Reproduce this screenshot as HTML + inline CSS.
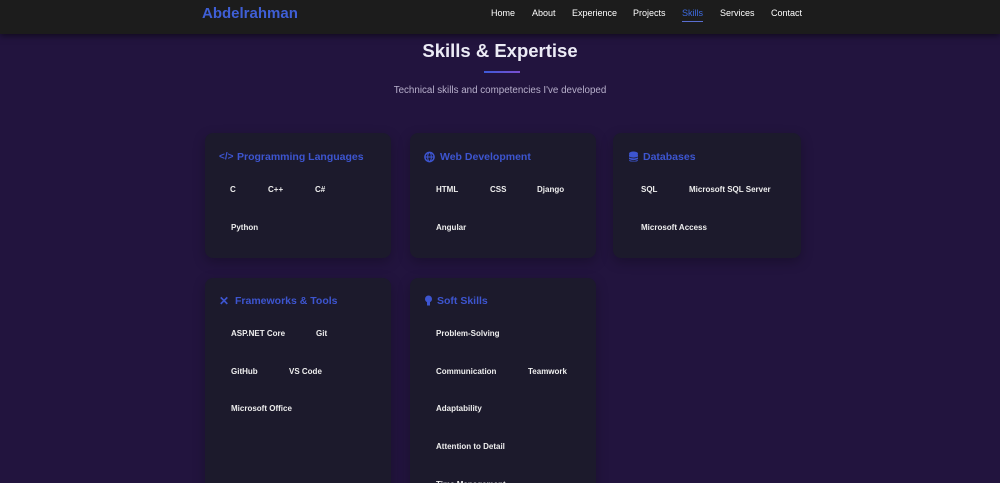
<!DOCTYPE html>
<html style="width:1000px;height:483px;overflow:hidden"><head><meta charset="utf-8"><style>
*{margin:0;padding:0;box-sizing:border-box}
body{width:1000px;height:483px;overflow:hidden;background:#22143e;font-family:"Liberation Sans",sans-serif;position:relative}
.nav{position:absolute;left:0;top:0;width:1000px;height:34px;background:#1c1c1c;box-shadow:0 2px 6px rgba(0,0,0,.5);z-index:2}
.logo{position:absolute;left:202px;top:5px;font-size:15px;font-weight:bold;color:#3f5fd6}
.nl{position:absolute;top:8px;font-size:9px;color:#fff}
.t{position:absolute;font-size:8px;font-weight:bold;color:#eee;transform:translateY(-45%)}
.card{position:absolute;background:#1c1a2c;border-radius:8px;box-shadow:0 4px 12px rgba(0,0,0,.25)}
.h{position:absolute;font-size:10.5px;font-weight:bold;color:#3d55d0;transform:translateY(-42%)}
.ic{position:absolute;color:#3d55d0;transform:translateY(-50%)}
</style></head><body>
<div class="nav">
<div class="logo">Abdelrahman</div>
<div class="nl" style="left:491px">Home</div>
<div class="nl" style="left:532px">About</div>
<div class="nl" style="left:572px">Experience</div>
<div class="nl" style="left:633px">Projects</div>
<div class="nl" style="left:682px;color:#3d6ae0">Skills</div>
<div style="position:absolute;left:682px;top:21px;width:21px;height:1px;background:#5a6ed0"></div>
<div class="nl" style="left:720px">Services</div>
<div class="nl" style="left:771px">Contact</div>
</div>
<div style="position:absolute;left:0;width:1000px;top:40px;text-align:center;font-size:18.5px;font-weight:bold;color:#ececf6">Skills &amp; Expertise</div>
<div style="position:absolute;left:484px;top:71px;width:36px;height:2px;background:linear-gradient(90deg,#3d5ad8,#7a4fd0)"></div>
<div style="position:absolute;left:0;width:1000px;top:85px;text-align:center;font-size:9.8px;color:#b8b0cc">Technical skills and competencies I've developed</div>

<div class="card" style="left:205px;top:133px;width:186px;height:125px"></div>
<div class="card" style="left:410px;top:133px;width:186px;height:125px"></div>
<div class="card" style="left:613px;top:133px;width:188px;height:125px"></div>
<div class="card" style="left:205px;top:278px;width:186px;height:220px"></div>
<div class="card" style="left:410px;top:278px;width:186px;height:220px"></div>

<div class="ic" style="left:219px;top:157px;font-size:10px;font-weight:bold">&lt;/&gt;</div>
<div class="h" style="left:237px;top:156px">Programming Languages</div>
<svg class="ic" style="left:424px;top:157px" width="11" height="11" viewBox="0 0 12 12"><circle cx="6" cy="6" r="5" fill="none" stroke="#3d55d0" stroke-width="1.6"/><ellipse cx="6" cy="6" rx="2" ry="5" fill="none" stroke="#3d55d0" stroke-width="1.2"/><path d="M1 6h10" stroke="#3d55d0" stroke-width="1.2"/></svg>
<div class="h" style="left:440px;top:156px">Web Development</div>
<svg class="ic" style="left:629px;top:157px" width="9" height="11" viewBox="0 0 9 11"><ellipse cx="4.5" cy="2" rx="4.5" ry="2" fill="#3d55d0"/><rect x="0" y="2" width="9" height="8" rx="2" fill="#3d55d0"/><path d="M0 5.5q4.5 2 9 0M0 8q4.5 2 9 0" stroke="#1c1a2c" stroke-width=".8" fill="none"/></svg>
<div class="h" style="left:643px;top:156px">Databases</div>
<div class="ic" style="left:219px;top:301px;font-size:12px;font-weight:bold">✕</div>
<div class="h" style="left:235px;top:300px">Frameworks &amp; Tools</div>
<svg class="ic" style="left:425px;top:301px" width="7" height="11" viewBox="0 0 7 11"><circle cx="3.5" cy="3.5" r="3.5" fill="#3d55d0"/><rect x="2" y="6" width="3" height="4" fill="#3d55d0"/></svg>
<div class="h" style="left:437px;top:300px">Soft Skills</div>

<div class="t" style="left:230px;top:189px">C</div>
<div class="t" style="left:268px;top:189px">C++</div>
<div class="t" style="left:315px;top:189px">C#</div>
<div class="t" style="left:231px;top:227px">Python</div>
<div class="t" style="left:436px;top:189px">HTML</div>
<div class="t" style="left:490px;top:189px">CSS</div>
<div class="t" style="left:537px;top:189px">Django</div>
<div class="t" style="left:436px;top:227px">Angular</div>
<div class="t" style="left:641px;top:189px">SQL</div>
<div class="t" style="left:689px;top:189px">Microsoft SQL Server</div>
<div class="t" style="left:641px;top:227px">Microsoft Access</div>
<div class="t" style="left:231px;top:333px">ASP.NET Core</div>
<div class="t" style="left:316px;top:333px">Git</div>
<div class="t" style="left:231px;top:371px">GitHub</div>
<div class="t" style="left:289px;top:371px">VS Code</div>
<div class="t" style="left:231px;top:408px">Microsoft Office</div>
<div class="t" style="left:436px;top:333px">Problem-Solving</div>
<div class="t" style="left:436px;top:371px">Communication</div>
<div class="t" style="left:528px;top:371px">Teamwork</div>
<div class="t" style="left:436px;top:408px">Adaptability</div>
<div class="t" style="left:436px;top:446px">Attention to Detail</div>
<div class="t" style="left:436px;top:484px">Time Management</div>
</body></html>
